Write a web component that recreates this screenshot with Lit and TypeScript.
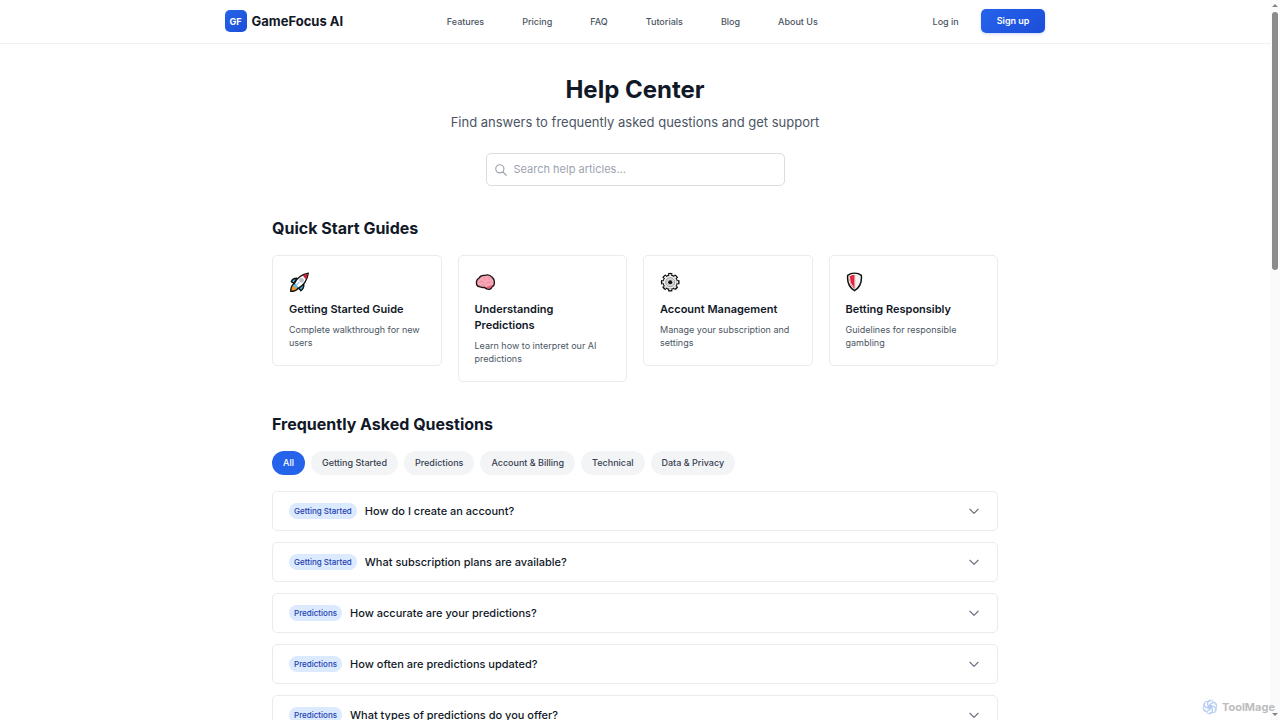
import { LitElement, html, css, svg } from "lit";
import { customElement, state } from "lit/decorators.js";

const NAV = ["Features", "Pricing", "FAQ", "Tutorials", "Blog", "About Us"];

const CATEGORIES = ["All", "Getting Started", "Predictions", "Account & Billing", "Technical", "Data & Privacy"];

const QUESTIONS = [
  { category: "Getting Started", text: "How do I create an account?" },
  { category: "Getting Started", text: "What subscription plans are available?" },
  { category: "Predictions", text: "How accurate are your predictions?" },
  { category: "Predictions", text: "How often are predictions updated?" },
  { category: "Predictions", text: "What types of predictions do you offer?" },
];

const rocket = svg`
  <path d="M9 20 L4 17 Q6 11 14 11 Z" fill="#3fb4e6" stroke="#111" stroke-width="2.4" stroke-linejoin="round"/>
  <path d="M17 28 L21 33 Q27 29 26 21 Z" fill="#3fb4e6" stroke="#111" stroke-width="2.4" stroke-linejoin="round"/>
  <path d="M8 21 Q3 25 3 34 Q12 34 16 29 Z" fill="#f39a2b" stroke="#111" stroke-width="2.4" stroke-linejoin="round"/>
  <path d="M9 21 Q15 6 34 2 Q31 21 16 29 Z" fill="#fff" stroke="#111" stroke-width="2.4" stroke-linejoin="round"/>
  <path d="M24 6 Q28 4 33 3 Q32 9 30 13 Z" fill="#c8202e"/>
  <path d="M10 21 L16 27 L13 29 L7 24 Z" fill="#5fc4ee"/>
  <circle cx="22" cy="14.500" r="3.4" fill="#c3c8cd" stroke="#9aa0a6"/>
  <path d="M13 23 L18 18" stroke="#92d3f5" stroke-width="2.4"/>`;

const brain = svg`
  <path d="M3 22 Q1 14 7 11 Q10 5 17 6 Q25 3 30 9 Q35 13 34 20 Q34 25 30 26 Q28 32 22 30 Q18 29 17 27 Q12 28 9 26 Q4 26 3 22 Z" fill="#f7a6b5" stroke="#21161a" stroke-width="2.4" stroke-linejoin="round"/>
  <path d="M19 27 Q22 30 26 29 Q29 27 31 23 Q24 25 19 27 Z" fill="#e8596a"/>
  <path d="M8 18 Q12 14 15 18 M17 8 Q15 12 18 14 M20 20 Q24 16 28 19 M11 24 Q14 21 18 23 M25 9 Q23 12 27 14" fill="none" stroke="#e58799" stroke-width="1.5"/>`;

const gear = svg`
  <circle cx="18" cy="18" r="13.500" fill="#111"/>
  <circle cx="18" cy="18" r="14" fill="none" stroke="#111" stroke-width="5" pathLength="16" stroke-dasharray="1.3 0.7" stroke-dashoffset="0.650"/>
  <circle cx="18" cy="18" r="11.500" fill="#ededed"/>
  <circle cx="18" cy="18" r="12.500" fill="none" stroke="#ededed" stroke-width="3" pathLength="16" stroke-dasharray="0.8 1.2" stroke-dashoffset="0.400"/>
  <circle cx="18" cy="18" r="8" fill="#d4d4d4" stroke="#9b9b9b" stroke-width="1.600"/>
  <circle cx="18" cy="18" r="3.600" fill="#111"/>`;

const shield = svg`
  <path d="M15 2 Q22 2 27 6 Q29 24 15 33 Q1 24 3 6 Q8 2 15 2 Z" fill="#f3f3f3" stroke="#111" stroke-width="2.600" stroke-linejoin="round"/>
  <path d="M15 5 V30 Q5 22 6 8 Q10 5 15 5 Z" fill="#e3263a"/>
  <path d="M6 8 Q6 20 13 27" fill="none" stroke="#f3dada" stroke-width="1.600"/>
  <path d="M16 6 V28" stroke="#f5a3aa" stroke-width="1.500" stroke-dasharray="2 2"/>`;

const GUIDES = [
  { icon: rocket, title: "Getting Started Guide", text: "Complete walkthrough for new users" },
  { icon: brain, title: "Understanding Predictions", text: "Learn how to interpret our AI predictions" },
  { icon: gear, title: "Account Management", text: "Manage your subscription and settings" },
  { icon: shield, title: "Betting Responsibly", text: "Guidelines for responsible gambling" },
];

@customElement("site-header")
class SiteHeader extends LitElement {
  static styles = css`
    :host { display: block; border-bottom: 1px solid #f0f1f3; }
    .bar {
      box-sizing: border-box; max-width: 821px; margin: 0 auto; padding: 9px 0 10px;
      display: flex; align-items: center; justify-content: space-between;
    }
    a { color: inherit; text-decoration: none; }
    .brand { display: flex; align-items: center; gap: 5px; font-size: 13px; font-weight: 700; color: #111827; }
    .mark {
      display: grid; place-items: center; width: 22px; height: 22px; border-radius: 5px;
      background: linear-gradient(135deg, #2563eb, #1d4ed8); color: #fff; font-size: 9px;
    }
    .nav { display: flex; gap: 38px; font-size: 9px; font-weight: 500; color: #4b5563; }
    .actions { display: flex; align-items: center; gap: 11px; font-size: 9px; }
    .login { padding: 5px 11px; font-weight: 500; color: #4b5563; }
    .signup {
      font: inherit; font-weight: 600; line-height: 14px; color: #fff; padding: 5px 16px; border: 0;
      border-radius: 5px; background: linear-gradient(135deg, #2563eb, #1d4ed8);
      box-shadow: 0 1px 3px rgb(37 99 235 / 25%); cursor: pointer;
    }
  `;
  render() {
    return html`<header class="bar">
      <a class="brand" href="#"><span class="mark">GF</span><span>GameFocus AI</span></a>
      <nav class="nav">${NAV.map((n) => html`<a href="#">${n}</a>`)}</nav>
      <div class="actions"><a class="login" href="#">Log in</a><button class="signup" type="button">Sign up</button></div>
    </header>`;
  }
}

@customElement("guide-card")
class GuideCard extends LitElement {
  static properties = { guide: { attribute: false } };
  declare guide: (typeof GUIDES)[number];
  static styles = css`
    :host { display: block; }
    .card {
      display: block; padding: 16px; border: 1px solid #eaebee; border-radius: 5px;
      color: inherit; text-decoration: none;
    }
    .icon { display: block; width: 21px; height: 21px; margin-bottom: 8px; }
    .title { margin: 0 0 6px; font-size: 11px; line-height: 16px; font-weight: 600; color: #111827; }
    .text { margin: 0; font-size: 9px; line-height: 13px; color: #4b5563; }
  `;
  render() {
    return html`<a class="card" href="#">
      <svg class="icon" viewBox="0 0 37 37" aria-hidden="true">${this.guide.icon}</svg>
      <h3 class="title">${this.guide.title}</h3>
      <p class="text">${this.guide.text}</p>
    </a>`;
  }
}

@customElement("faq-item")
class FaqItem extends LitElement {
  static properties = { category: {}, question: {} };
  declare category: string;
  declare question: string;
  static styles = css`
    :host { display: block; border: 1px solid #eaebee; border-radius: 5px; }
    .row {
      box-sizing: border-box; width: 100%; display: flex; align-items: center; gap: 8px;
      padding: 11px 16px; border: 0; background: none; font: inherit; text-align: left; cursor: pointer;
    }
    .badge {
      padding: 0 5px; border-radius: 8px; background: #dbeafe; color: #1e40af;
      font-size: 8px; line-height: 16px; font-weight: 500;
    }
    .question { flex: 1; font-size: 11px; line-height: 16px; font-weight: 500; color: #111827; }
    .chevron { width: 14px; height: 14px; fill: none; stroke: #6b7280; stroke-width: 2; stroke-linecap: round; stroke-linejoin: round; }
  `;
  render() {
    return html`<button class="row" type="button" aria-expanded="false">
      <span class="badge">${this.category}</span>
      <span class="question">${this.question}</span>
      <svg class="chevron" viewBox="0 0 24 24" aria-hidden="true"><path d="M19 9l-7 7-7-7" /></svg>
    </button>`;
  }
}

@customElement("app-root")
class AppRoot extends LitElement {
  @state() private category = "All";

  static styles = css`
    :host {
      position: relative; display: grid; grid-template-columns: minmax(0, 1fr) 10px; height: 100vh;
      overflow: hidden; background: #fff; font-family: Inter, "Liberation Sans", sans-serif; color: #111827;
    }
    .page { min-width: 0; overflow-y: auto; scrollbar-width: none; }
    .main { max-width: 726px; margin: 0 auto; padding: 32px 0; }
    .intro { text-align: center; margin-bottom: 32px; }
    .title { margin: 0 0 10px; font-size: 24px; line-height: 27px; font-weight: 700; }
    .lead { margin: 0 0 21px; font-size: 13px; line-height: 19px; color: #4b5563; }
    .search {
      box-sizing: border-box; max-width: 299px; margin: 0 auto; padding: 0 7px; display: flex;
      align-items: center; gap: 6px; border: 1px solid #d9dce1; border-radius: 5px;
    }
    .glass { width: 14px; height: 14px; fill: none; stroke: #9ca3af; stroke-width: 2; stroke-linecap: round; }
    .field {
      flex: 1; min-width: 0; padding: 7px 0; border: 0; outline: 0; background: none;
      font: inherit; font-size: 11px; line-height: 17px; height: 17px; color: inherit;
    }
    .field::placeholder { color: #9ca3af; opacity: 1; }
    .heading { margin: 0 0 16px; font-size: 16px; line-height: 21px; font-weight: 700; }
    .guides {
      display: grid; grid-template-columns: repeat(4, minmax(0, 1fr)); align-items: start; gap: 16px; margin-bottom: 32px;
    }
    .chips { display: flex; flex-wrap: wrap; gap: 6px; margin-bottom: 16px; }
    .chip {
      padding: 5px 11px; border: 0; border-radius: 12px; background: #f3f4f6; color: #374151;
      font: inherit; font-size: 9px; line-height: 14px; font-weight: 500; cursor: pointer;
    }
    .chip[aria-pressed="true"] { background: #2563eb; color: #fff; }
    .list { display: grid; gap: 11px; }
    .scroll { display: flex; flex-direction: column; align-items: center; justify-content: space-between; background: #fafafa; padding: 4px 0; }
    .thumb { width: 6px; height: 258px; margin: 5px 0 auto; border-radius: 3px; background: #8a8a8a; }
    .arrow { width: 6px; height: 3px; fill: #858585; }
    .watermark {
      position: absolute; right: 5px; bottom: 5px; display: flex; align-items: center; gap: 4px;
      font-size: 11px; line-height: 16px; font-weight: 700; color: #bdbdbd;
    }
    .flower { width: 16px; height: 16px; fill: none; stroke: #b5cdf3; stroke-width: 2; }
  `;

  render() {
    return html`
      <div class="page">
        <site-header></site-header>
        <main class="main">
          <section class="intro">
            <h1 class="title">Help Center</h1>
            <p class="lead">Find answers to frequently asked questions and get support</p>
            <label class="search">
              <svg class="glass" viewBox="0 0 24 24" aria-hidden="true"><path d="M21 21l-6-6m2-5a7 7 0 11-14 0 7 7 0 0114 0z" /></svg>
              <input class="field" type="text" placeholder="Search help articles..." aria-label="Search help articles" />
            </label>
          </section>
          <h2 class="heading">Quick Start Guides</h2>
          <section class="guides">${GUIDES.map((g) => html`<guide-card .guide=${g}></guide-card>`)}</section>
          <h2 class="heading">Frequently Asked Questions</h2>
          <div class="chips">
            ${CATEGORIES.map(
              (c) => html`<button class="chip" type="button" aria-pressed=${c === this.category ? "true" : "false"}
                @click=${() => (this.category = c)}>${c}</button>`
            )}
          </div>
          <div class="list">
            ${QUESTIONS.filter((q) => this.category === "All" || q.category === this.category).map(
              (q) => html`<faq-item .category=${q.category} .question=${q.text}></faq-item>`
            )}
          </div>
        </main>
      </div>
      <div class="scroll" aria-hidden="true">
        <svg class="arrow" viewBox="0 0 6 3"><path d="M0 3L3 0L6 3Z" /></svg>
        <div class="thumb"></div>
        <svg class="arrow" viewBox="0 0 6 3"><path d="M0 0L3 3L6 0Z" /></svg>
      </div>
      <div class="watermark">
        <svg class="flower" viewBox="0 0 32 32" aria-hidden="true">
          <circle cx="16" cy="16" r="4.500" fill="#b5cdf3" />
          ${[0, 60, 120, 180, 240, 300].map(
            (a) => svg`<path transform="rotate(${a} 16 16)" d="M11 12V8Q11 2 17 2Q22 2 23 7M16 11L23 7Q27 9 27 12" />`
          )}
        </svg>
        <span>ToolMage</span>
      </div>
    `;
  }
}
